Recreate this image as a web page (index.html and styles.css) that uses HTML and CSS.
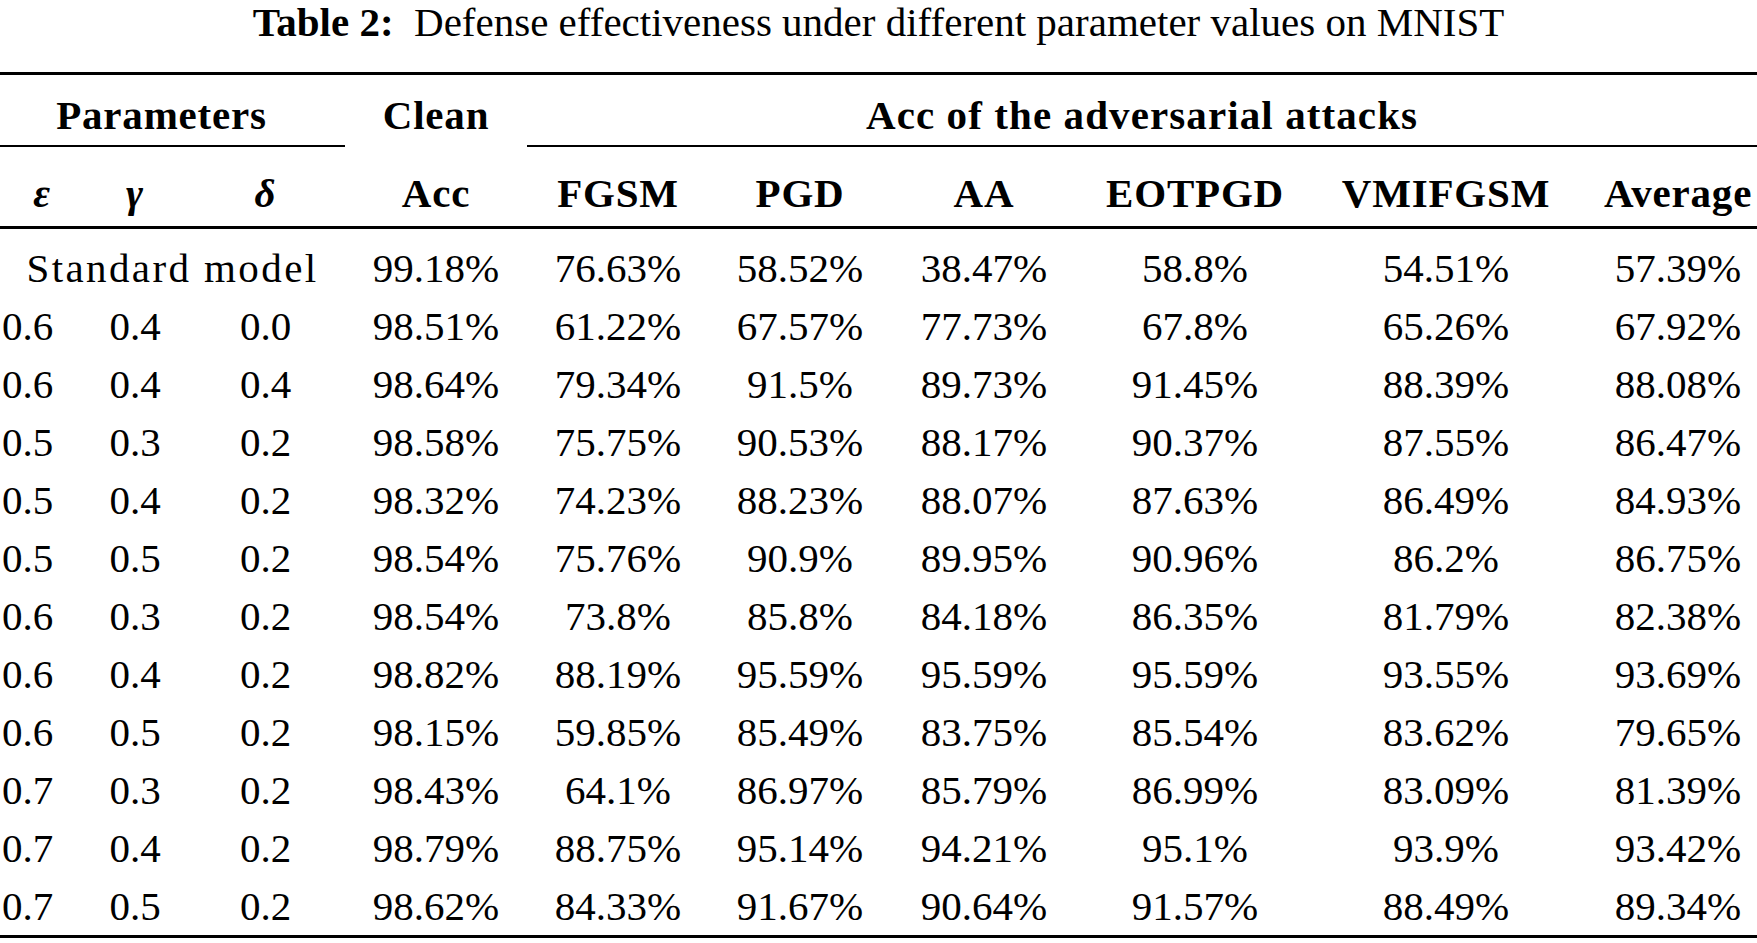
FILE: index.html
```html
<!DOCTYPE html>
<html lang="en">
<head>
<meta charset="utf-8">
<title>Table 2</title>
<link rel="stylesheet" href="styles.css">
</head>
<body>
<div class="caption"><span class="cap-label">Table 2:</span>&ensp;Defense effectiveness under different parameter values on MNIST</div>
<table class="results">
  <colgroup>
    <col class="c1"><col class="c2"><col class="c3"><col class="c4"><col class="c5">
    <col class="c6"><col class="c7"><col class="c8"><col class="c9"><col class="c10">
  </colgroup>
  <thead>
    <tr class="h1">
      <th colspan="3" class="group params">Parameters</th>
      <th class="nogroup">Clean</th>
      <th colspan="6" class="group wide">Acc of the adversarial attacks</th>
    </tr>
    <tr class="h2">
      <th class="greek">ε</th>
      <th class="greek">γ</th>
      <th class="greek">δ</th>
      <th>Acc</th>
      <th>FGSM</th>
      <th>PGD</th>
      <th>AA</th>
      <th>EOTPGD</th>
      <th>VMIFGSM</th>
      <th class="last">Average</th>
    </tr>
  </thead>
  <tbody>
    <tr class="first"><td colspan="3" class="std">Standard model</td><td>99.18%</td><td>76.63%</td><td>58.52%</td><td>38.47%</td><td>58.8%</td><td>54.51%</td><td class="last">57.39%</td></tr>
    <tr><td class="eps">0.6</td><td>0.4</td><td>0.0</td><td>98.51%</td><td>61.22%</td><td>67.57%</td><td>77.73%</td><td>67.8%</td><td>65.26%</td><td class="last">67.92%</td></tr>
    <tr><td class="eps">0.6</td><td>0.4</td><td>0.4</td><td>98.64%</td><td>79.34%</td><td>91.5%</td><td>89.73%</td><td>91.45%</td><td>88.39%</td><td class="last">88.08%</td></tr>
    <tr><td class="eps">0.5</td><td>0.3</td><td>0.2</td><td>98.58%</td><td>75.75%</td><td>90.53%</td><td>88.17%</td><td>90.37%</td><td>87.55%</td><td class="last">86.47%</td></tr>
    <tr><td class="eps">0.5</td><td>0.4</td><td>0.2</td><td>98.32%</td><td>74.23%</td><td>88.23%</td><td>88.07%</td><td>87.63%</td><td>86.49%</td><td class="last">84.93%</td></tr>
    <tr><td class="eps">0.5</td><td>0.5</td><td>0.2</td><td>98.54%</td><td>75.76%</td><td>90.9%</td><td>89.95%</td><td>90.96%</td><td>86.2%</td><td class="last">86.75%</td></tr>
    <tr><td class="eps">0.6</td><td>0.3</td><td>0.2</td><td>98.54%</td><td>73.8%</td><td>85.8%</td><td>84.18%</td><td>86.35%</td><td>81.79%</td><td class="last">82.38%</td></tr>
    <tr><td class="eps">0.6</td><td>0.4</td><td>0.2</td><td>98.82%</td><td>88.19%</td><td>95.59%</td><td>95.59%</td><td>95.59%</td><td>93.55%</td><td class="last">93.69%</td></tr>
    <tr><td class="eps">0.6</td><td>0.5</td><td>0.2</td><td>98.15%</td><td>59.85%</td><td>85.49%</td><td>83.75%</td><td>85.54%</td><td>83.62%</td><td class="last">79.65%</td></tr>
    <tr><td class="eps">0.7</td><td>0.3</td><td>0.2</td><td>98.43%</td><td>64.1%</td><td>86.97%</td><td>85.79%</td><td>86.99%</td><td>83.09%</td><td class="last">81.39%</td></tr>
    <tr><td class="eps">0.7</td><td>0.4</td><td>0.2</td><td>98.79%</td><td>88.75%</td><td>95.14%</td><td>94.21%</td><td>95.1%</td><td>93.9%</td><td class="last">93.42%</td></tr>
    <tr><td class="eps">0.7</td><td>0.5</td><td>0.2</td><td>98.62%</td><td>84.33%</td><td>91.67%</td><td>90.64%</td><td>91.57%</td><td>88.49%</td><td class="last">89.34%</td></tr>
  </tbody>
</table>
</body>
</html>
```
FILE: styles.css
```css
html, body {
  margin: 0;
  padding: 0;
  background: #ffffff;
}

body {
  width: 1757px;
  font-family: "Liberation Serif", "Times New Roman", serif;
  font-size: 41px;
  color: #000000;
}

.caption {
  text-align: center;
  line-height: 44px;
  height: 44px;
  margin-bottom: 28px;
  white-space: nowrap;
}

.cap-label {
  font-weight: bold;
}

.results {
  width: 1757px;
  table-layout: fixed;
  border-collapse: separate;
  border-spacing: 0;
  border-top: 3px solid #000;
  border-bottom: 3px solid #000;
}

.c1 { width: 84px; }
.c2 { width: 102px; }
.c3 { width: 159px; }
.c4 { width: 182px; }
.c5 { width: 182px; }
.c6 { width: 182px; }
.c7 { width: 186px; }
.c8 { width: 236px; }
.c9 { width: 266px; }
.c10 { width: 178px; }

.results th,
.results td {
  padding: 0;
  text-align: center;
  white-space: nowrap;
}

.results th {
  font-weight: bold;
  line-height: 44px;
  letter-spacing: 0.8px;
}

.results th.wide {
  letter-spacing: 1.1px;
}

.results td {
  line-height: 58px;
}

.results td.std {
  letter-spacing: 2.4px;
}

.h1 th {
  padding-top: 18px;
  padding-bottom: 8px;
  border-bottom: 2px solid transparent;
}

.h1 th.group {
  border-bottom-color: #000;
}

.h1 th.params {
  padding-right: 22px;
}

.h2 th {
  padding-top: 24px;
  padding-bottom: 11px;
  border-bottom: 3px solid #000;
}

.greek {
  font-style: italic;
}

.results .last {
  padding-left: 20px;
}

.results td.eps {
  text-align: left;
  padding-left: 2px;
}

.first td {
  padding-top: 10px;
}
```
